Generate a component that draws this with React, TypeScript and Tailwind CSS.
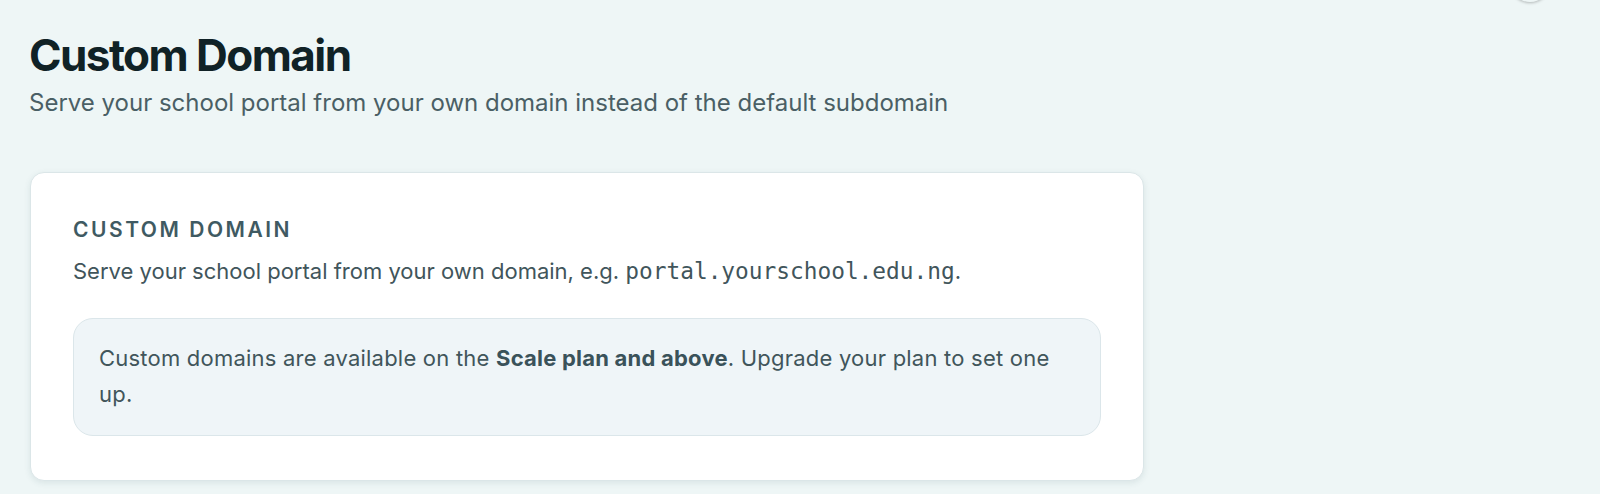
import React from "react";

const sans = "font-['Inter',_'Noto_Sans',_sans-serif]";

export default function App() {
  return (
    <div className={`relative min-h-[494px] w-full overflow-hidden bg-[#eef6f6] ${sans}`}>
      {/* avatar sticking in from the header above */}
      <div className="absolute -top-[38px] right-[50px] h-[40px] w-[40px] rounded-full bg-[#eef6f6] shadow-[0_1px_3px_rgba(0,0,0,0.25)]" />

      <div className="pl-[29px] pt-[31px]">
        <h1 className="text-[44px] font-bold leading-[1.1] tracking-[-0.035em] text-[#102226]">
          Custom Domain
        </h1>
        <p className="mt-[6px] text-[24px] leading-[1.5] text-[#4a5f65]">
          Serve your school portal from your own domain instead of the default subdomain
        </p>

        <div className="mt-[51px] ml-px w-[1114px] rounded-[14px] border border-[#dbe6e8] bg-white px-[42px] pt-[42px] pb-[44px] shadow-[0_2px_6px_rgba(40,80,90,0.10)]">
          <h2 className="text-[21px] font-semibold uppercase leading-[1.4] tracking-[0.12em] text-[#3f5a62]">
            Custom Domain
          </h2>
          <p className="mt-[9px] text-[22px] leading-[1.5] text-[#41555b]">
            Serve your school portal from your own domain, e.g.{" "}
            <code className="font-['DejaVu_Sans_Mono',_monospace] text-[22.8px] text-[#41555b]">
              portal.yourschool.edu.ng
            </code>
            .
          </p>

          <div className="mt-[30px] rounded-[20px] border border-[#dbe6ea] bg-[#eff5f8] px-[25px] pt-[21px] pb-[23px]">
            <p className="text-[22px] leading-[36px] tracking-[0.01em] text-[#41555b]">
              Custom domains are available on the{" "}
              <strong className="font-bold text-[#3a525a]">Scale plan and above</strong>. Upgrade your plan to set one up.
            </p>
          </div>
        </div>
      </div>
    </div>
  );
}
